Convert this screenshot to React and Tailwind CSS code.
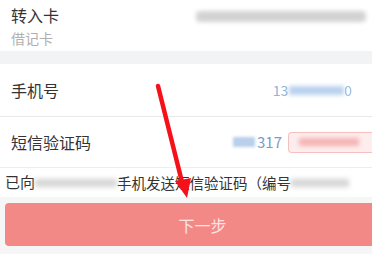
export default function App() {
  const font = { fontFamily: '"Noto Sans CJK SC", "Noto Sans", sans-serif' };
  return (
    <div className="relative w-[372px] h-[254px] overflow-hidden bg-[#f6f6f7]" style={font}>
      <div className="bg-white h-[51px] flex items-start justify-between pl-[11px] pr-[6px]">
        <div className="flex flex-col pt-[3px]">
          <span className="text-[16px] leading-[24px] text-[#333]">转入卡</span>
          <span className="text-[14px] leading-[22px] text-[#b0b0b0]">借记卡</span>
        </div>
        <div className="mt-[11px] h-[11px] w-[170px] bg-[#c8c8c8] blur-[2px] opacity-80 rounded-sm"></div>
      </div>
      <div className="h-[13px] bg-[#f2f3f5]"></div>
      <div className="bg-white h-[53px] flex items-center justify-between pl-[11px] pr-[20px] border-b border-[#e8e9eb]">
        <span className="text-[16px] text-[#333]">手机号</span>
        <div className="flex items-center">
          <span className="text-[14px] text-[#8fb3dc]">13</span>
          <span className="w-[55px] h-[9px] bg-[#b9d2ee] blur-[2px] ml-[1px]"></span>
          <span className="text-[14px] text-[#9dbde0] blur-[0.5px]">0</span>
        </div>
      </div>
      <div className="bg-white h-[51px] flex items-center justify-between pl-[11px] border-b border-[#eeeeee]">
        <span className="text-[16px] text-[#333]">短信验证码</span>
        <div className="flex items-center">
          <span className="w-[22px] h-[10px] bg-[#b9cfeb] blur-[1.5px] mr-[2px]"></span>
          <span className="text-[15px] text-[#7c9bc6]">317</span>
          <div className="ml-[6px] w-[84px] h-[21px] rounded-l-[4px] border border-r-0 border-[#f6c0c0] bg-[#fdeded] flex items-center pl-[10px]">
            <span className="w-[60px] h-[8px] bg-[#f4a6a6] blur-[2px] opacity-80"></span>
          </div>
        </div>
      </div>
      <div className="bg-white h-[29px] flex items-center pl-[5px]">
        <span className="text-[15px] text-[#333]">已向</span>
        <span className="w-[82px] h-[8px] bg-[#c4c4c4] blur-[2.5px] opacity-70"></span>
        <span className="text-[14.5px] text-[#333]">手机发送短信验证码（编号</span>
        <span className="w-[58px] h-[8px] bg-[#c4c4c4] blur-[2.5px] opacity-70"></span>
      </div>
      <div className="pl-[5px] pt-[6px]">
        <div className="h-[43px] bg-[#f38987] rounded-l-[4px] flex items-center justify-center pl-[28px]">
          <span className="text-[16px] text-[#fde3e1]">下一步</span>
        </div>
      </div>
      <svg className="absolute left-0 top-0" width="372" height="254" viewBox="0 0 372 254">
        <line x1="158" y1="86" x2="183" y2="186" stroke="#f5101a" strokeWidth="4.5" strokeLinecap="round" />
        <polygon points="175,181 191,178 187,198" fill="#f5101a" />
      </svg>
    </div>
  );
}
